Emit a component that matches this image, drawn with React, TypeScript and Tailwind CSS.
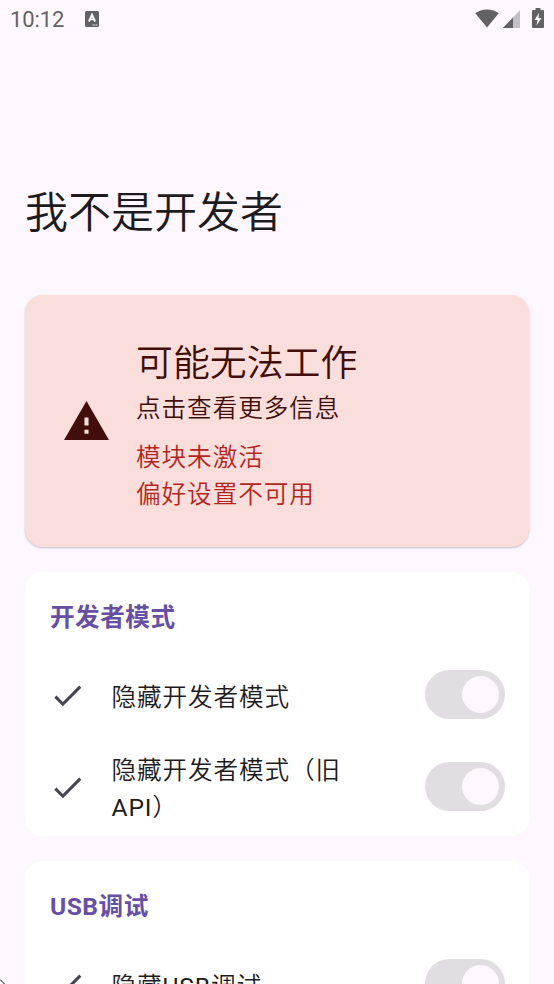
import { useState } from 'react';
import clsx from 'clsx';

const sections = [
  { title: '开发者模式', items: ['隐藏开发者模式', '隐藏开发者模式（旧API）'] },
  { title: 'USB调试', items: ['隐藏USB调试'] },
];

function StatusBar() {
  return (
    <header className="flex h-[38px] shrink-0 items-center px-2.5 text-[#646166]">
      <span className="w-[54px] pt-0.5 text-[22px] leading-[38px] tracking-[-0.1px]">10:12</span>
      <svg className="ml-[21px]" width="14" height="16" viewBox="0 0 14 16">
        <rect width="14" height="16" rx="1.5" fill="currentColor" />
        <path d="M3.9 10.500 7 3.700 10.100 10.500M5 8.400h4" fill="none" stroke="#fef7ff" strokeWidth="1.9" />
        <path d="M7.500 14h5.500" stroke="#fef7ff" strokeDasharray="1.200 0.600" />
      </svg>
      <div className="-mt-0.5 ml-auto flex items-center">
        <svg width="24" height="19" viewBox="0 0 24 19">
          <path d="M12 18.500 0.300 4.200C3.300 1.700 7.400 0.400 12 0.400s8.700 1.300 11.700 3.800z" fill="currentColor" />
        </svg>
        <svg className="ml-1" width="17" height="19" viewBox="0 0 17 19">
          <path d="M0 19 17 1v18z" fill="#c4bec6" />
          <path d="M0 19 10 8.400V19z" fill="currentColor" />
        </svg>
        <svg className="ml-3" width="12" height="20" viewBox="0 0 12 20">
          <path d="M3.500 0h5v2H11q1 0 1 1v16q0 1-1 1H1q-1 0-1-1V3q0-1 1-1h2.500z" fill="currentColor" />
          <path d="M7 5 2.500 12H5.500L4.500 17.500 9.500 10H6.500z" fill="#fef7ff" />
        </svg>
      </div>
    </header>
  );
}

function Switch() {
  const [on, setOn] = useState(true);

  return (
    <button
      role="switch"
      aria-checked={on}
      onClick={() => setOn(!on)}
      className={clsx('-mt-px flex h-[49px] w-20 shrink-0 items-center rounded-full bg-[#e2dce3] px-1.5', on ? 'justify-end' : 'justify-start')}
    >
      <span className="size-[37px] rounded-full bg-[#fef7ff]" />
    </button>
  );
}

// Latin runs keep the regular weight next to the lighter Chinese text
function Label({ text }: { text: string }) {
  return text.split(/([A-Z]+)/).map((part, i) =>
    i % 2 ? <span key={i} className="font-normal">{part}</span> : part
  );
}

function WarningCard() {
  return (
    <section className="flex h-[252px] shrink-0 items-center rounded-[18px] bg-[#f9dedb] pl-[37px] shadow-[0_1px_2px_rgba(60,50,90,0.3)]">
      <svg className="text-[#410e0b]" width="49" height="49" viewBox="0 0 24 24" fill="currentColor">
        <path d="M1 21h22L12 2 1 21zm12-3h-2v-2h2v2zm0-4h-2v-4h2v4z" />
      </svg>
      <div className="ml-[25px] pt-[10px] text-[24.600px] font-[350] leading-[37px] tracking-[0.95px] text-[#410e0b]">
        <h2 className="-mt-px mb-px text-[36.900px] leading-[50px] tracking-normal">可能无法工作</h2>
        <p>点击查看更多信息</p>
        <p className="mt-3 text-[#b3261e]">模块未激活</p>
        <p className="text-[#b3261e]">偏好设置不可用</p>
      </div>
    </section>
  );
}

export default function App() {
  return (
    <div className="relative flex h-[984px] w-[554px] flex-col overflow-hidden bg-[#fef7ff] font-[Roboto,'Noto_Sans_CJK_SC',sans-serif] text-[#1d1b20]">
      <StatusBar />
      <h1 className="mt-[144px] px-[25px] text-[43px] font-[350] leading-[62px]">我不是开发者</h1>

      <main className="mt-[51px] flex flex-col gap-[25px] px-[25px]">
        <WarningCard />
        {sections.map(section => (
          <section key={section.title} className="shrink-0 rounded-[18px] bg-white pb-[3px] pl-[25px] pr-6">
            <h2 className="h-[77px] pt-[26.500px] text-[24.600px] font-bold leading-[37px] tracking-[0.5px] text-[#6750a4]">{section.title}</h2>
            {section.items.map(item => (
              <div key={item} className="flex h-[92px] items-center">
                <svg className="-ml-px shrink-0 text-[#49454f]" width="37" height="37" viewBox="0 0 24 24" fill="currentColor">
                  <path d="M9 16.170 4.830 12l-1.420 1.410L9 19 21 7l-1.410-1.410z" />
                </svg>
                <p className="ml-[25.500px] mr-[60px] flex-1 pt-[4px] text-[24.600px] font-[350] leading-[37px] tracking-[0.9px]">
                  <Label text={item} />
                </p>
                <Switch />
              </div>
            ))}
          </section>
        ))}
      </main>

      {/* Pointer tip */}
      <svg className="absolute bottom-0 left-0" width="5" height="5" viewBox="0 0 5 5">
        <path d="M0 0 4.500 4.500H0z" fill="#fff" />
        <path d="M0 0.500 4.500 5" stroke="#000" />
      </svg>
    </div>
  );
}
